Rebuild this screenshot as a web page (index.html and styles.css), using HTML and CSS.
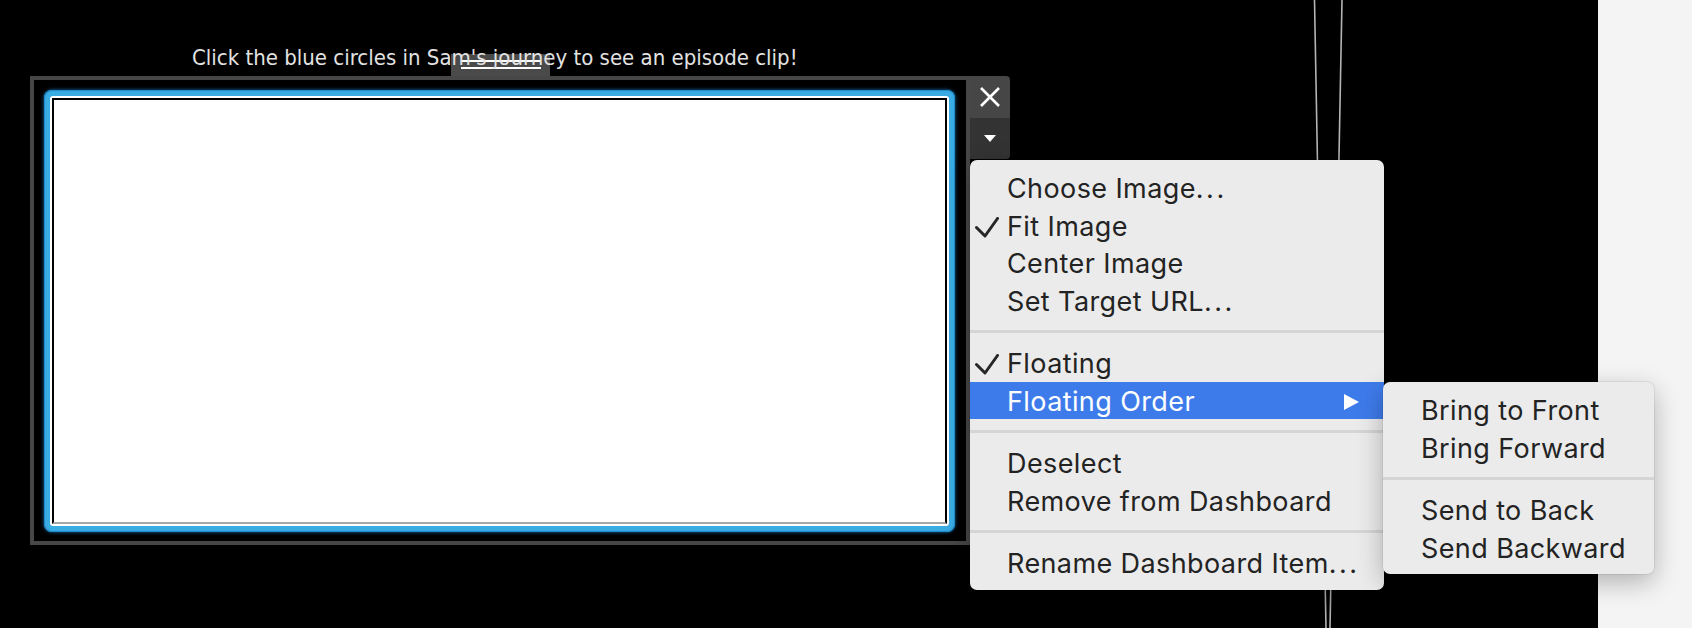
FILE: index.html
```html
<!DOCTYPE html>
<html>
<head>
<meta charset="utf-8">
<link rel="stylesheet" href="styles.css">
</head>
<body>
<div class="app">
  <div class="canvas">
    <svg class="wires" width="1598" height="628" viewBox="0 0 1598 628">
      <line x1="1314.5" y1="0" x2="1326" y2="628"/>
      <line x1="1342" y1="0" x2="1330" y2="628"/>
    </svg>

    <div class="title">Click the blue circles in Sam's journey to see an episode clip!</div>

    <div class="floater">
      <div class="item-col">
        <div class="tab"><span></span><span></span></div>
        <div class="frame">
          <div class="glow"><div class="mat"><div class="pic"></div></div></div>
        </div>
      </div>
      <div class="controls">
        <div class="btn close">
          <svg width="20" height="20" viewBox="0 0 20 20"><path d="M1 1 L19 19 M19 1 L1 19"/></svg>
        </div>
        <div class="btn more">
          <svg width="12" height="8" viewBox="0 0 12 8"><path d="M0 0 H12 L6 7 Z"/></svg>
        </div>
      </div>
    </div>

    <div class="menu main">
      <div class="row">Choose Image<span class="dots">...</span></div>
      <div class="row"><svg class="check" width="24" height="21" viewBox="0 0 24 21"><path d="M1.5 10.5 L10 19 L22.5 1.5"/></svg>Fit Image</div>
      <div class="row">Center Image</div>
      <div class="row">Set Target URL<span class="dots">...</span></div>
      <div class="sep"></div>
      <div class="row"><svg class="check" width="24" height="21" viewBox="0 0 24 21"><path d="M1.5 10.5 L10 19 L22.5 1.5"/></svg>Floating</div>
      <div class="row active">Floating Order<svg class="arrow" width="15" height="16" viewBox="0 0 15 16"><path d="M0 0 L15 8 L0 16 Z"/></svg></div>
      <div class="sep"></div>
      <div class="row">Deselect</div>
      <div class="row">Remove from Dashboard</div>
      <div class="sep"></div>
      <div class="row">Rename Dashboard Item<span class="dots">...</span></div>
    </div>

    <div class="menu sub">
      <div class="row">Bring to Front</div>
      <div class="row">Bring Forward</div>
      <div class="sep"></div>
      <div class="row">Send to Back</div>
      <div class="row">Send Backward</div>
    </div>
  </div>
  <div class="side"></div>
</div>
</body>
</html>
```

FILE: styles.css
```css
html, body {
  margin: 0;
  padding: 0;
  background: #000;
}

.app {
  display: flex;
  width: 1692px;
  height: 628px;
  overflow: hidden;
  font-family: Inter, "Liberation Sans", sans-serif;
}

.canvas {
  position: relative;
  width: 1598px;
  height: 628px;
  flex: none;
  background: #000;
}

.side {
  flex: 1;
  background: #f4f4f4;
}

.wires {
  position: absolute;
  left: 0;
  top: 0;
}

.wires line {
  stroke: #b4b4b4;
  stroke-width: 1.6;
}

.title {
  position: absolute;
  left: 192px;
  top: 45px;
  z-index: 3;
  white-space: nowrap;
  font-family: "Liberation Sans Narrow", "DejaVu Sans Condensed", "Liberation Sans", sans-serif;
  font-size: 22px;
  line-height: 26px;
  color: #e2e2e2;
}

.floater {
  position: absolute;
  left: 30px;
  top: 54px;
  z-index: 2;
  display: flex;
  align-items: flex-start;
}

.item-col {
  width: 940px;
}

.tab {
  margin-left: 421px;
  width: 99px;
  height: 22px;
  box-sizing: border-box;
  padding-top: 6px;
  background: #4a4a4a;
  display: flex;
  flex-direction: column;
  align-items: center;
  gap: 5px;
}

.tab span {
  display: block;
  width: 80px;
  height: 2px;
  background: #fff;
}

.frame {
  width: 940px;
  height: 469px;
  box-sizing: border-box;
  border: 4px solid #474747;
  padding: 10px 11px 9px 10px;
}

.glow {
  height: 100%;
  box-sizing: border-box;
  padding: 6px;
  border-radius: 8px;
  background: #3aace4;
  box-shadow: inset 0 0 1px 1px #1f88c8, 0 0 3px 1px rgba(14, 72, 112, 0.95);
}

.mat {
  height: 100%;
  box-sizing: border-box;
  padding: 2px;
  border-radius: 3px;
  background: #fff;
}

.pic {
  height: 100%;
  box-sizing: border-box;
  border: 2px solid #000;
  border-bottom-color: #a8a8a8;
  background: #fff;
}

.controls {
  margin-top: 22px;
  width: 40px;
}

.btn {
  display: flex;
  align-items: center;
  justify-content: center;
}

.close {
  height: 42px;
  background: #464646;
  border-top-right-radius: 4px;
}

.close path {
  stroke: #fff;
  stroke-width: 2.6;
  fill: none;
}

.more {
  height: 41px;
  background: #333;
  border-bottom-right-radius: 4px;
}

.more path {
  fill: #fff;
}

.menu {
  position: absolute;
  z-index: 5;
  background: #ebebeb;
  border-radius: 7px;
  padding: 9px 0 8px;
  box-shadow: 0 0 0 1px rgba(0, 0, 0, 0.06), 0 8px 26px rgba(0, 0, 0, 0.28);
  font-size: 27px;
  letter-spacing: 0.4px;
  color: #232323;
}

.menu.main {
  left: 970px;
  top: 160px;
  width: 414px;
}

.menu.sub {
  left: 1383px;
  top: 382px;
  width: 271px;
}

.row {
  position: relative;
  height: 37.5px;
  box-sizing: border-box;
  padding-top: 3px;
  padding-left: 37px;
  line-height: 33.5px;
  white-space: nowrap;
}

.sub .row {
  padding-left: 38px;
}

.row.active {
  background: #3e7bea;
  color: #fff;
}

.dots {
  letter-spacing: 2.5px;
}

.check {
  position: absolute;
  left: 5px;
  top: 10px;
}

.check path {
  fill: none;
  stroke: #262626;
  stroke-width: 3;
  stroke-linecap: round;
  stroke-linejoin: round;
}

.arrow {
  position: absolute;
  right: 25px;
  top: 12px;
}

.arrow path {
  fill: #fff;
}

.sep {
  height: 25px;
  box-sizing: border-box;
  padding-top: 11px;
}

.sep::before {
  content: "";
  display: block;
  height: 3px;
  background: #d5d5d5;
}
```
